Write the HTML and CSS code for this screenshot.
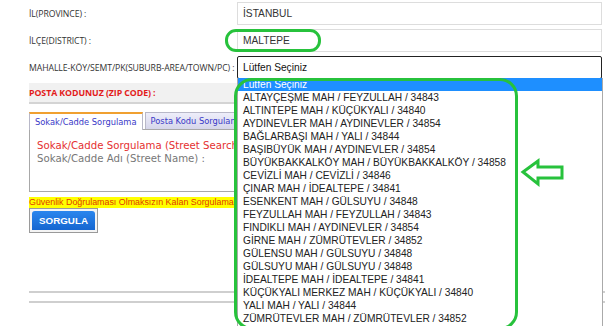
FILE: index.html
```html
<!DOCTYPE html>
<html lang="tr">
<head>
<meta charset="utf-8">
<link rel="stylesheet" href="styles.css">
</head>
<body>
<div class="page">
  <div class="form">
    <div class="row r1">
      <div class="label">İL(PROVINCE) :</div>
      <div class="input">İSTANBUL</div>
    </div>
    <div class="row r2">
      <div class="label">İLÇE(DISTRICT) :</div>
      <div class="input">MALTEPE</div>
    </div>
    <div class="row r3">
      <div class="label">MAHALLE-KÖY/SEMT/PK(SUBURB-AREA/TOWN/PC) :</div>
      <div class="select">Lütfen Seçiniz</div>
    </div>
    <div class="zip">
      <div class="label red">POSTA KODUNUZ (ZIP CODE) :</div>
    </div>
  </div>

  <div class="tabs">
    <div class="tab-head">
      <div class="tab active">Sokak/Cadde Sorgulama</div>
      <div class="tab">Posta Kodu Sorgulama</div>
    </div>
    <div class="tab-body">
      <div class="tb-title">Sokak/Cadde Sorgulama (Street Search)</div>
      <div class="tb-label">Sokak/Cadde Adı (Street Name) :</div>
    </div>
  </div>

  <div class="warn">Güvenlik Doğrulaması Olmaksızın Kalan Sorgulama Hakkınız</div>
  <div class="btn-wrap"><div class="btn">SORGULA</div></div>

  <div class="rule rule1"></div>
  <div class="rule rule2"></div>

  <ul class="dropdown">
    <li class="sel">Lütfen Seçiniz</li>
    <li>ALTAYÇEŞME MAH / FEYZULLAH / 34843</li>
    <li>ALTINTEPE MAH / KÜÇÜKYALI / 34840</li>
    <li>AYDINEVLER MAH / AYDINEVLER / 34854</li>
    <li>BAĞLARBAŞI MAH / YALI / 34844</li>
    <li>BAŞIBÜYÜK MAH / AYDINEVLER / 34854</li>
    <li>BÜYÜKBAKKALKÖY MAH / BÜYÜKBAKKALKÖY / 34858</li>
    <li>CEVİZLİ MAH / CEVİZLİ / 34846</li>
    <li>ÇINAR MAH / İDEALTEPE / 34841</li>
    <li>ESENKENT MAH / GÜLSUYU / 34848</li>
    <li>FEYZULLAH MAH / FEYZULLAH / 34843</li>
    <li>FINDIKLI MAH / AYDINEVLER / 34854</li>
    <li>GİRNE MAH / ZÜMRÜTEVLER / 34852</li>
    <li>GÜLENSU MAH / GÜLSUYU / 34848</li>
    <li>GÜLSUYU MAH / GÜLSUYU / 34848</li>
    <li>İDEALTEPE MAH / İDEALTEPE / 34841</li>
    <li>KÜÇÜKYALI MERKEZ MAH / KÜÇÜKYALI / 34840</li>
    <li>YALI MAH / YALI / 34844</li>
    <li>ZÜMRÜTEVLER MAH / ZÜMRÜTEVLER / 34852</li>
  </ul>

  <div class="mark mark-district"></div>
  <div class="mark mark-list"></div>
  <svg class="arrow" width="48" height="30" viewBox="0 0 48 30">
    <polygon points="3,14 18,3 18,9 42,9 42,20 18,20 18,26" fill="none" stroke="#27c23c" stroke-width="3" stroke-linejoin="miter"/>
  </svg>
</div>
</body>
</html>
```

FILE: styles.css
```css
* { box-sizing: border-box; }
html, body { margin: 0; padding: 0; background: #fff; }
body { width: 605px; height: 326px; overflow: hidden; }

.page {
  position: relative;
  width: 605px;
  height: 326px;
  padding-left: 29px;
  font-family: "Open Sans", "Noto Sans", sans-serif;
}

.form { padding-top: 2px; }
.row {
  display: flex;
  align-items: center;
  height: 23px;
  margin-bottom: 4px;
}
.label {
  width: 208px;
  font-size: 8.7px;
  color: #333;
  white-space: nowrap;
  letter-spacing: -0.08px;
}
.input, .select {
  width: 365px;
  height: 23px;
  border: 1px solid #ddd;
  padding-left: 5px;
  display: flex;
  align-items: center;
  font-family: "Liberation Sans", Arial, sans-serif;
  font-size: 10.2px;
  color: #333;
}
.select {
  border: 1px solid #222;
  border-radius: 2px;
  color: #111;
}
.zip {
  height: 21px;
  width: 574px;
  background: #f1f1f1;
  border-bottom: 2px solid #d4d4d4;
  display: flex;
  align-items: center;
}
.red { color: #e31b1b; font-weight: 700; font-size: 8.8px; }

.tabs {
  margin-top: 8px;
  width: 208px;
  overflow: hidden;
}
.tab-head { display: flex; gap: 2px; height: 17px; width: 300px; }
.tab {
  font-family: "DejaVu Sans", Verdana, sans-serif;
  font-size: 8.3px;
  color: #3a3ac8;
  padding: 0 5px;
  display: flex;
  align-items: center;
  border: 1px solid #b8b8c8;
  border-bottom: none;
  background: linear-gradient(#eeeefa, #d6d6ea);
  white-space: nowrap;
}
.tab.active {
  background: #fff;
  border-top: 2px solid #f0a030;
  height: 18px;
  z-index: 1;
}
.tab-body {
  width: 300px;
  border: 1px solid #a8a8a8;
  height: 63px;
  padding: 9px 7px;
  font-family: "DejaVu Sans", Verdana, sans-serif;
  font-size: 10.2px;
  white-space: nowrap;
  line-height: 13px;
}
.tb-title { color: #e53030; }
.tb-label { color: #777; }

.warn {
  margin-top: 5px;
  width: 208px;
  height: 11px;
  background: #ffff00;
  color: #e03a00;
  font-family: "Liberation Sans", Arial, sans-serif;
  font-size: 8.9px;
  line-height: 11px;
  white-space: nowrap;
  overflow: hidden;
}
.btn-wrap {
  width: 69px;
  height: 25px;
  border: 1px solid #9a9a9a;
  padding: 2px;
  background: #f4f4f4;
}
.btn {
  height: 100%;
  background: linear-gradient(#2a86ee, #1566d0);
  border-radius: 3px 3px 0 0;
  color: #fff;
  font-family: "Liberation Sans", Arial, sans-serif;
  font-weight: 700;
  font-size: 9.8px;
  display: flex;
  align-items: center;
  justify-content: center;
}
.rule {
  width: 576px;
  height: 2px;
  background: #cfcfcf;
}
.rule1 { margin-top: 58px; }
.rule2 { margin-top: 8px; }

.dropdown {
  position: absolute;
  left: 237px;
  top: 78px;
  width: 366px;
  height: 260px;
  margin: 0;
  padding: 0;
  list-style: none;
  background: #fff;
  border: 1px solid #aaa;
  border-top: none;
  font-family: "Liberation Sans", Arial, sans-serif;
  font-size: 10.2px;
  color: #222;
}
.dropdown li {
  height: 13px;
  line-height: 13px;
  padding-left: 5px;
  white-space: nowrap;
}
.dropdown li.sel { background: #1e8fff; color: #fff; }

.mark {
  position: absolute;
  border: 3px solid #27c23c;
}
.mark-district {
  left: 225px;
  top: 29px;
  width: 96px;
  height: 23px;
  border-radius: 11px;
}
.mark-list {
  left: 234px;
  top: 78px;
  width: 284px;
  height: 252px;
  border-radius: 18px;
}
.arrow {
  position: absolute;
  left: 520px;
  top: 158px;
}
```
